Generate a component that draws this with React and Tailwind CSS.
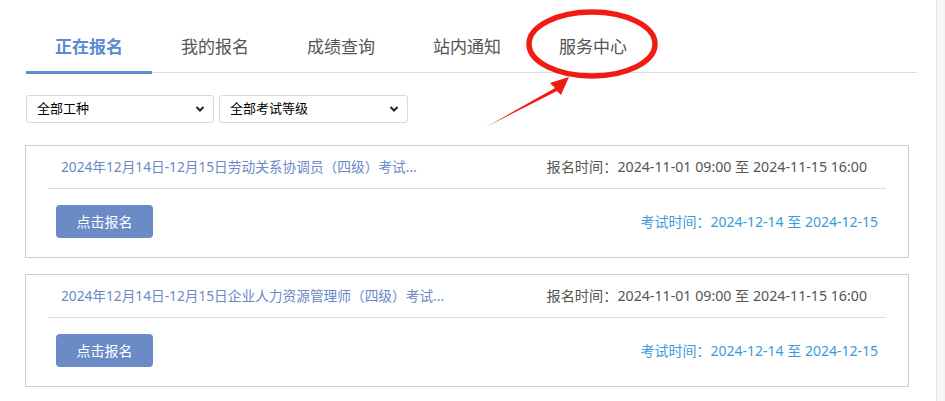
import React from "react";

const tabs = ["正在报名", "我的报名", "成绩查询", "站内通知", "服务中心"];

const items = [
  "2024年12月14日-12月15日劳动关系协调员（四级）考试...",
  "2024年12月14日-12月15日企业人力资源管理师（四级）考试...",
];

function Select({ label, w }) {
  return (
    <div className={`${w} h-[28px] border border-[#d9d9d9] rounded-[3px] bg-white flex items-center justify-between pl-[10px] pr-[8px] text-[13px] text-black`}>
      <span>{label}</span>
      <svg width="10" height="8" viewBox="0 0 10 8">
        <path d="M1.5 2 L5 5.5 L8.5 2" fill="none" stroke="#222" strokeWidth="2" />
      </svg>
    </div>
  );
}

function Card({ title }) {
  return (
    <div className="w-[884px] h-[113px] border border-[#cccccc] bg-white">
      <div className="mx-[22px] h-[43px] border-b border-[#dddddd] flex items-center justify-between pl-[13px] pr-[19px]">
        <span className="text-[13.7px] text-[#6a89c6]">{title}</span>
        <span className="text-[14.2px] text-[#555555]">报名时间：2024-11-01 09:00 至 2024-11-15 16:00</span>
      </div>
      <div className="flex items-center justify-between pl-[30px] pr-[30px] pt-[16px]">
        <button className="w-[97px] h-[33px] rounded-[4px] bg-[#6b8bc7] text-white text-[14px]">点击报名</button>
        <span className="text-[14px] text-[#3a9bdc]">考试时间：2024-12-14 至 2024-12-15</span>
      </div>
    </div>
  );
}

export default function App() {
  return (
    <div
      className="relative w-[945px] h-[401px] bg-white overflow-hidden flex"
      style={{ fontFamily: '"Noto Sans", "Noto Sans CJK SC", sans-serif' }}
    >
      <div className="flex-1 pl-[26px] pt-[22px]">
        <div className="w-[891px] flex border-b border-[#dddddd] h-[51px]">
          {tabs.map((t, i) => (
            <div
              key={t}
              className={`w-[126px] flex items-center justify-center text-[17px] ${
                i === 0
                  ? "font-bold text-[#5b8bd0] border-b-[3px] border-[#5b8bd0] mb-[-2px]"
                  : "text-[#555555]"
              }`}
            >
              {t}
            </div>
          ))}
        </div>
        <div className="flex gap-[5px] mt-[22px]">
          <Select label="全部工种" w="w-[188px]" />
          <Select label="全部考试等级" w="w-[189px]" />
        </div>
        <div className="flex flex-col gap-[16px] mt-[22px] ml-[-1px]">
          {items.map((t) => (
            <Card key={t} title={t} />
          ))}
        </div>
      </div>
      <div className="w-[9px] h-full bg-[#f5f5f5] border-l border-[#e6e6e6]" />

      <svg className="absolute left-0 top-0 pointer-events-none" width="945" height="401">
        <ellipse cx="592" cy="44" rx="63" ry="32" fill="none" stroke="#f01c14" strokeWidth="5.5" />
        <polygon points="486,127 555,88 550,83 569,77 561,95 557,91" fill="#f01c14" />
      </svg>
    </div>
  );
}
